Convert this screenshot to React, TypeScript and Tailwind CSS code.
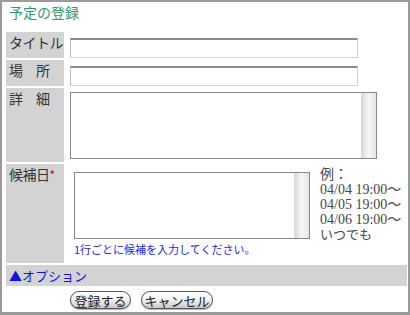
import React from "react";

const jp = "font-['Noto_Sans_CJK_JP',sans-serif]";

function TextBox({ w }: { w: string }) {
  return (
    <input
      type="text"
      className={`${w} h-[20px] border border-[#d4d4d4] border-t-2 border-t-[#8a8a8a] border-l-[#bcbcbc] bg-white outline-none`}
    />
  );
}

function Area({ w, h }: { w: string; h: string }) {
  return (
    <div className={`${w} ${h} flex border border-[#888] bg-white`}>
      <div className="flex-1" />
      <div className="w-[15px] bg-gradient-to-r from-[#d6d6d6] via-[#f7f7f7] to-[#e4e4e4]" />
    </div>
  );
}

function Label({ children }: { children: React.ReactNode }) {
  return (
    <div className="overflow-hidden whitespace-nowrap bg-[#d3d3d3] pl-[3px] pt-[1px] text-[14px] leading-[18px] tracking-[-0.5px] text-[#333]">
      {children}
    </div>
  );
}

export default function App() {
  return (
    <div
      className={`h-[315px] w-[410px] overflow-hidden border-2 border-b-[3px] border-[#9a9a9a] bg-white ${jp}`}
    >
      <h1 className="h-[30px] pl-[7px] pt-[1px] text-[14px] leading-[18px] text-[#2f9a6c]">
        予定の登録
      </h1>

      <div className="ml-[4px] mr-px grid grid-cols-[58px_1fr] gap-[2px]">
        <Label>タイトル</Label>
        <div className="h-[26px] pl-[4px] pt-[4px]">
          <TextBox w="w-[288px]" />
        </div>

        <Label>場　所</Label>
        <div className="h-[26px] pl-[4px] pt-[4px]">
          <TextBox w="w-[288px]" />
        </div>

        <Label>詳　細</Label>
        <div className="h-[74px] pl-[4px] pt-[4px]">
          <Area w="w-[307px]" h="h-[67px]" />
        </div>

        <Label>
          候補日<span className="text-[12px] text-[#e00000]">*</span>
        </Label>
        <div className="flex h-[99px]">
          <div className="pl-[8px] pt-[8px]">
            <Area w="w-[236px]" h="h-[67px]" />
            <p className="mt-[3px] whitespace-nowrap text-[11px] leading-[14px] text-[#2424f0]">
              1行ごとに候補を入力してください。
            </p>
          </div>
          <div className="whitespace-nowrap pl-[10px] pt-[3px] font-['Liberation_Serif','Noto_Sans_CJK_JP',serif] text-[14px] leading-[15px] text-[#474747]">
            <p>例：</p>
            <p>04/04 19:00～</p>
            <p>04/05 19:00～</p>
            <p>04/06 19:00～</p>
            <p className="text-[13px]">いつでも</p>
          </div>
        </div>

        <div className="col-span-2 flex h-[21px] items-center bg-[#d3d3d3] pl-[3px] text-[13px] leading-[16px] text-[#1010f0]">
          ▲オプション
        </div>
      </div>

      <div className="ml-[68px] mt-[5px] flex gap-[10px]">
        <button
          type="button"
          className="flex h-[18px] w-[61px] items-center justify-center rounded-full border border-[#555] bg-gradient-to-b from-white via-[#f0f0f0] to-[#c8c8c8] text-[13px] leading-[15px] text-[#222] shadow-[0_1px_1px_rgba(0,0,0,0.3)]"
        >
          登録する
        </button>
        <button
          type="button"
          className="flex h-[18px] w-[72px] items-center justify-center rounded-full border border-[#555] bg-gradient-to-b from-white via-[#f0f0f0] to-[#c8c8c8] text-[13px] leading-[15px] text-[#222] shadow-[0_1px_1px_rgba(0,0,0,0.3)]"
        >
          キャンセル
        </button>
      </div>
    </div>
  );
}
